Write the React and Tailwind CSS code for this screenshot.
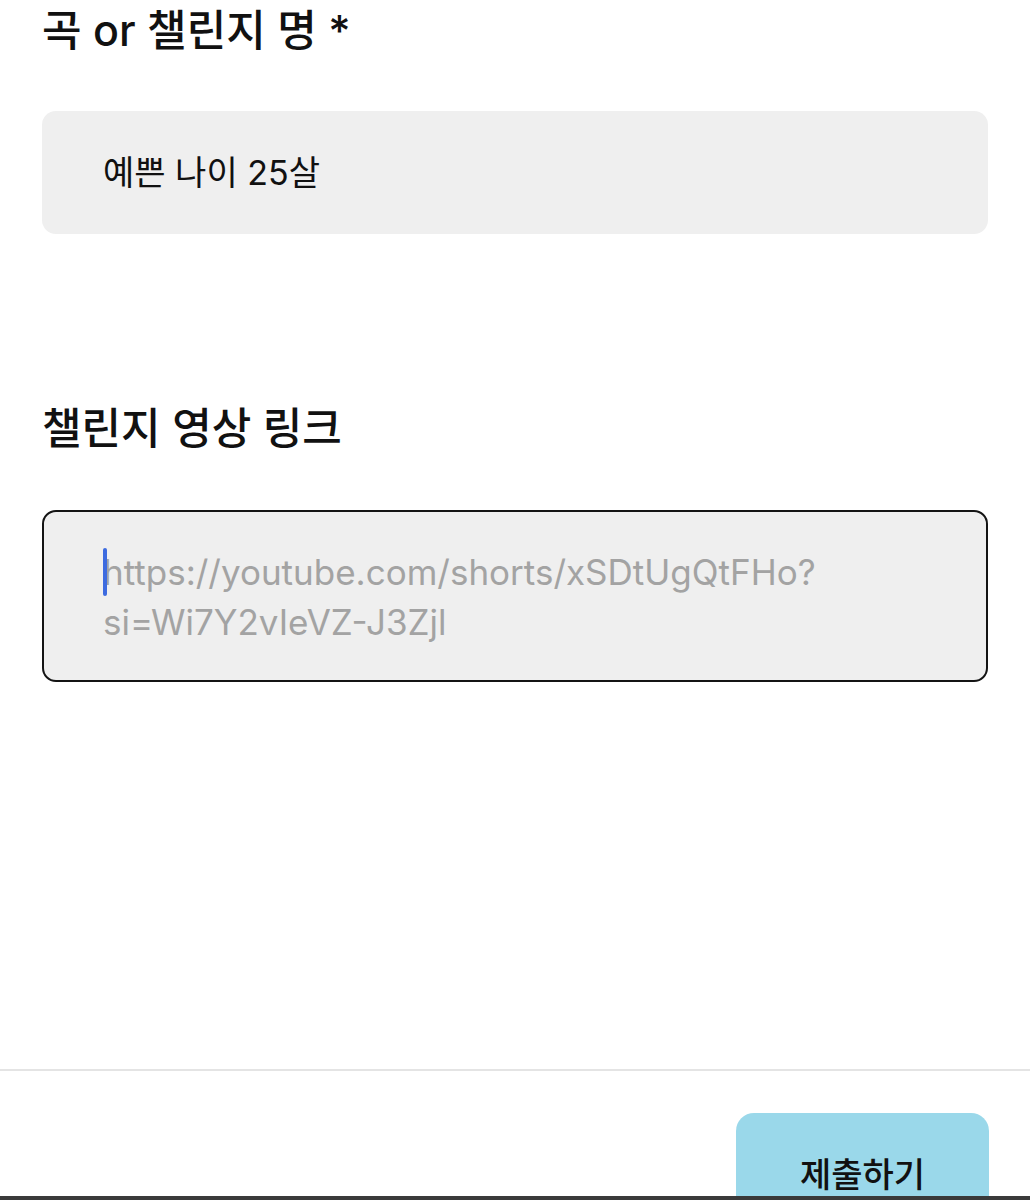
import { useState } from 'react';

const font = { fontFamily: 'Inter, "Noto Sans CJK KR", sans-serif' };

const App = () => {
  const [title] = useState('예쁜 나이 25살');

  return (
    <div className="relative h-[1200px] overflow-hidden bg-white text-[#111]" style={font}>
      <div className="px-[42px]">
        <h2 className="pt-[5px] text-[43px] leading-[50px] font-medium">곡 or 챌린지 명 *</h2>
        <div className="mt-[56px] flex h-[123px] items-center rounded-[14px] bg-[#efefef] pl-[61px] text-[34px]">
          {title}
        </div>

        <h2 className="mt-[169px] text-[43px] leading-[50px] font-medium">챌린지 영상 링크</h2>
        <div className="mt-[57px] h-[172px] rounded-[14px] border-2 border-[#141414] bg-[#efefef] pl-[59px] pr-[40px] pt-[35px]">
          <div className="relative text-[35px] leading-[50px] text-[#a3a3a3]">
            <span className="absolute left-0 top-[1px] h-[48px] w-[4px] rounded-full bg-[#3d6be0]" />
            <div>https://youtube.com/shorts/xSDtUgQtFHo?</div>
            <div>si=Wi7Y2vIeVZ-J3Zjl</div>
          </div>
        </div>
      </div>

      <div className="mt-[387px] h-[2px] bg-[#e4e4e4]" />

      <div className="mt-[42px] flex justify-end pr-[41px]">
        <button className="h-[120px] w-[253px] rounded-[18px] bg-[#9ad8ea] pt-[38px] text-[34px] leading-[48px] font-medium text-[#111] flex justify-center">
          제출하기
        </button>
      </div>

      <div className="absolute bottom-0 left-0 right-0 h-[4px] bg-[#3a3a3a]" />
    </div>
  );
};

export default App;
